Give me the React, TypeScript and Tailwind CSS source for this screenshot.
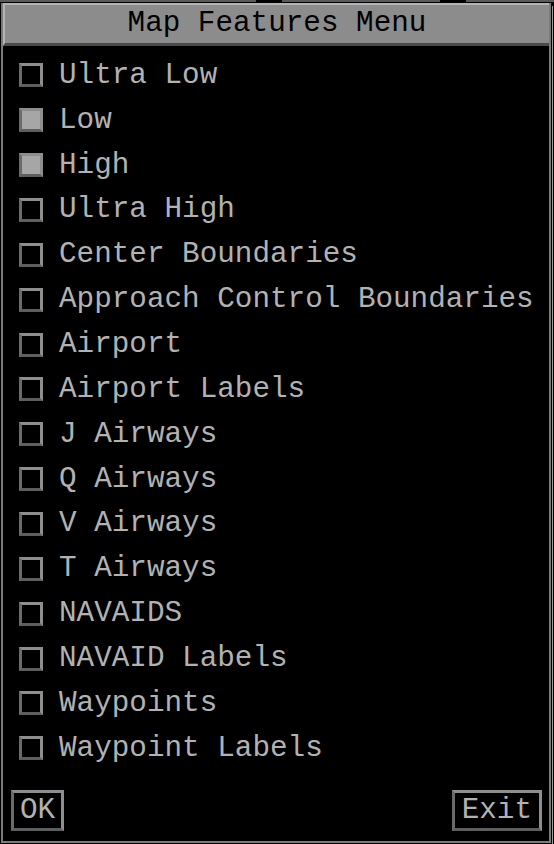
import React from "react";

const items: { label: string; checked: boolean }[] = [
  { label: "Ultra Low", checked: false },
  { label: "Low", checked: true },
  { label: "High", checked: true },
  { label: "Ultra High", checked: false },
  { label: "Center Boundaries", checked: false },
  { label: "Approach Control Boundaries", checked: false },
  { label: "Airport", checked: false },
  { label: "Airport Labels", checked: false },
  { label: "J Airways", checked: false },
  { label: "Q Airways", checked: false },
  { label: "V Airways", checked: false },
  { label: "T Airways", checked: false },
  { label: "NAVAIDS", checked: false },
  { label: "NAVAID Labels", checked: false },
  { label: "Waypoints", checked: false },
  { label: "Waypoint Labels", checked: false },
];

const mono = { fontFamily: '"Liberation Mono", "DejaVu Sans Mono", monospace' };

function Box({ checked }: { checked: boolean }) {
  return (
    <div
      className={`w-[24px] h-[24px] border-[3px] border-t-[#8e8e8e] border-r-[#8e8e8e] border-b-[#5e5e5e] border-l-[#6a6a6a] ${
        checked ? "bg-[#a6a6a6]" : "bg-black"
      }`}
    />
  );
}

export default function App() {
  return (
    <div className="w-[554px] h-[844px] bg-black overflow-hidden relative" style={mono}>
      <div className="flex h-[3px]">
        <div className="w-[256px] h-[2px] bg-[#5a5a5a]" />
        <div className="w-[26px]" />
        <div className="w-[158px] h-[2px] bg-[#5a5a5a]" />
        <div className="w-[26px]" />
        <div className="flex-1 h-[2px] bg-[#5a5a5a]" />
      </div>
      <div className="flex">
        <div className="ml-[1px] w-[550px] h-[840px] border-l-2 border-r-2 border-b-2 border-[#7a7a7a] flex flex-col">
          <div className="h-[43px] bg-[#8c8c8c] border-t-2 border-l-2 border-t-[#b4b4b4] border-l-[#b4b4b4] border-b-[3px] border-b-[#4a4a4a] flex items-center justify-center">
            <span className="text-[29.3px] leading-none text-black">Map Features Menu</span>
          </div>
          <div className="pt-[7px] pl-[16px] flex flex-col">
            {items.map((it) => (
              <div key={it.label} className="h-[44.87px] flex items-center">
                <Box checked={it.checked} />
                <span className="ml-[16px] text-[29.3px] leading-none text-[#b2b2b2] whitespace-pre">
                  {it.label}
                </span>
              </div>
            ))}
          </div>
          <div className="mt-[19px] flex justify-between pl-[8px] pr-[7px]">
            <div className="h-[41px] px-[6px] border-[3px] border-t-[#8e8e8e] border-r-[#8e8e8e] border-b-[#5e5e5e] border-l-[#6a6a6a] flex items-center">
              <span className="text-[29.3px] leading-none text-[#b2b2b2]">OK</span>
            </div>
            <div className="h-[41px] px-[7px] border-[3px] border-t-[#8e8e8e] border-r-[#8e8e8e] border-b-[#5e5e5e] border-l-[#6a6a6a] flex items-center">
              <span className="text-[29.3px] leading-none text-[#b2b2b2]">Exit</span>
            </div>
          </div>
        </div>
        <div className="ml-[1px] mt-[3px] w-[1px] h-[838px] bg-[#9a9a9a]" />
      </div>
    </div>
  );
}
